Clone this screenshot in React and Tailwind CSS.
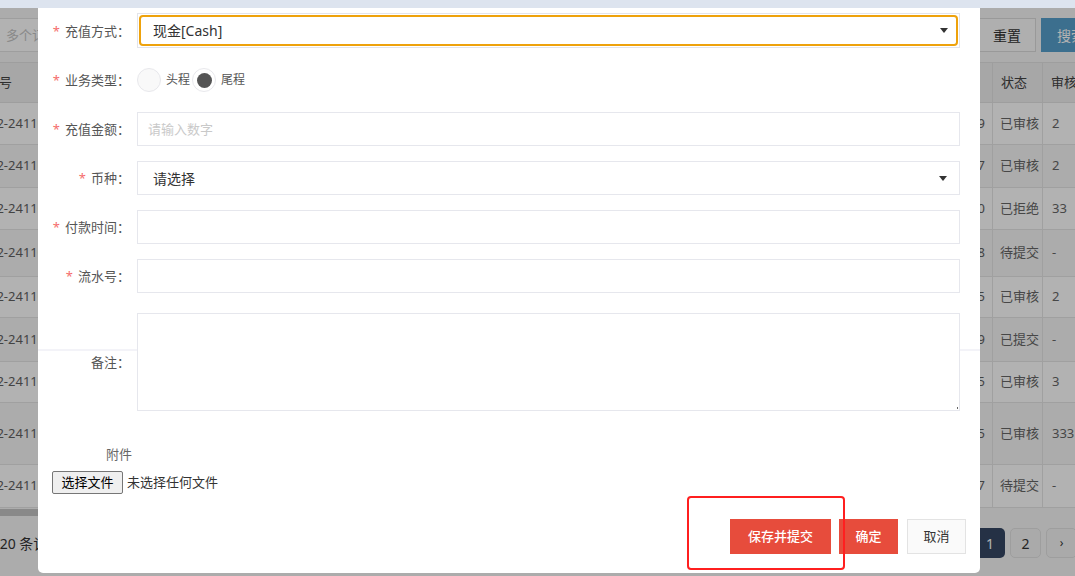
import React from 'react'

const rows = [
  { no: 'R2022-24110019', time: '2024-11-22 10:12:09', status: '已审核', audit: '2', h: 'h-[42px]', bg: 'bg-white' },
  { no: 'R2022-24110018', time: '2024-11-21 16:40:27', status: '已审核', audit: '2', h: 'h-[43px]', bg: 'bg-[#f7f7f7]' },
  { no: 'R2022-24110017', time: '2024-11-21 09:05:10', status: '已拒绝', audit: '33', h: 'h-[42px]', bg: 'bg-white' },
  { no: 'R2022-24110016', time: '2024-11-20 18:22:48', status: '待提交', audit: '-', h: 'h-[47px]', bg: 'bg-[#f7f7f7]' },
  { no: 'R2022-24110015', time: '2024-11-20 11:31:55', status: '已审核', audit: '2', h: 'h-[41px]', bg: 'bg-white' },
  { no: 'R2022-24110014', time: '2024-11-19 15:02:39', status: '已提交', audit: '-', h: 'h-[44px]', bg: 'bg-[#f7f7f7]' },
  { no: 'R2022-24110013', time: '2024-11-19 08:47:15', status: '已审核', audit: '3', h: 'h-[41px]', bg: 'bg-white' },
  { no: 'R2022-24110012', time: '2024-11-18 13:26:05', status: '已审核', audit: '333', h: 'h-[62px]', bg: 'bg-[#f7f7f7]' },
  { no: 'R2022-24110011', time: '2024-11-18 10:14:37', status: '待提交', audit: '-', h: 'h-[43px]', bg: 'bg-white' },
]

function Caret() {
  return (
    <svg width="8" height="5" viewBox="0 0 8 5" className="shrink-0">
      <path d="M0 0h8L4 5z" fill="#333" />
    </svg>
  )
}

function Label({ text, required }) {
  return (
    <div className="w-[78px] mr-[7px] shrink-0 text-right text-[13px] leading-[20px] text-[#555] whitespace-nowrap">
      {required && <span className="text-[#f56c6c] mr-[5px]">*</span>}
      {text}：
    </div>
  )
}

function BackgroundPage() {
  return (
    <div className="flex flex-col">
      {/* search bar */}
      <div className="flex items-center justify-between mt-[10px] h-[34px]">
        <input
          readOnly
          placeholder="多个订单号用逗号分隔"
          className="w-[320px] h-[34px] ml-[-1px] pl-[6px] bg-white border border-[#e2e2e2] text-[13px] placeholder:text-[#c4c4c4] outline-none"
        />
        <div className="flex gap-[5px] mr-[-26px]">
          <button className="w-[58px] h-[34px] bg-[#fbfbfb] border border-[#dcdcdc] text-[14px] text-[#333]">重置</button>
          <button className="w-[60px] h-[34px] bg-[#579fcc] text-[14px] text-white">搜索</button>
        </div>
      </div>

      {/* table */}
      <div className="ml-[-35px] w-[1138px] mt-[10px] text-[13px]">
        <div className="flex h-[41px] bg-[#efefef] border-y border-[#e3e3e3] text-[#444]">
          <div className="w-[200px] pl-[8px] flex items-center">订单号</div>
          <div className="flex-1 flex items-center justify-center border-r border-[#e3e3e3]">付款时间</div>
          <div className="w-[50px] pl-[8px] flex items-center border-r border-[#e3e3e3]">状态</div>
          <div className="w-[60px] pl-[8px] flex items-center">审核人</div>
        </div>
        {rows.map((r) => (
          <div key={r.no} className={`flex ${r.h} ${r.bg} border-b border-[#e6e6e6] text-[#616161]`}>
            <div className="w-[200px] pl-[1px] flex items-center">{r.no}</div>
            <div className="flex-1 flex items-center justify-end pr-[7px] border-r border-[#e6e6e6]">{r.time}</div>
            <div className="w-[50px] pl-[7px] flex items-center border-r border-[#e6e6e6] text-[#666]">{r.status}</div>
            <div className="w-[60px] pl-[9px] flex items-center text-[#666]">{r.audit}</div>
          </div>
        ))}
      </div>

      {/* horizontal scrollbar */}
      <div className="mt-[1px] h-[7px]">
        <div className="w-[520px] h-[7px] bg-[#c4c4c4]" />
      </div>

      {/* pagination */}
      <div className="flex items-center justify-between mt-[12px] h-[30px]">
        <div className="ml-[-18px] text-[14px] text-[#333]">共 20 条记录</div>
        <div className="flex gap-[5px] mr-[-2px] text-[14px]">
          <div className="w-[30px] h-[30px] rounded-[5px] bg-[#354764] text-white flex items-center justify-center">1</div>
          <div className="w-[31px] h-[30px] rounded-[5px] bg-[#f4f4f4] border border-[#e2e2e2] text-[#333] flex items-center justify-center">2</div>
          <div className="w-[31px] h-[30px] rounded-[5px] bg-[#f4f4f4] border border-[#e2e2e2] text-[#333] flex items-center justify-center text-[12px]">›</div>
        </div>
      </div>
    </div>
  )
}

function RechargeModal() {
  return (
    <div className="absolute left-[38px] top-0 w-[942px] h-[565px] bg-white rounded-b-[5px] px-[14px] pt-[5px]">
      {/* 充值方式 */}
      <div className="flex items-center h-[35px] mb-[15px] pr-[6px]">
        <Label text="充值方式" required />
        <div className="flex-1 h-[35px] border border-[#e3e4ea] p-[1px]">
          <div className="h-full border-2 border-[#eea20c] rounded-[4px] flex items-center justify-between pl-[12px] pr-[8px]">
            <span className="text-[14px] text-[#333]">现金[Cash]</span>
            <Caret />
          </div>
        </div>
      </div>

      {/* 业务类型 */}
      <div className="flex items-center h-[34px] mb-[15px] pr-[6px]">
        <Label text="业务类型" required />
        <div className="flex items-center text-[12px] text-[#555]">
          <span className="w-[24px] h-[24px] rounded-full border border-[#e8e8ec] bg-[#f9f9f9]" />
          <span className="ml-[5px] mr-[2px]">头程</span>
          <span className="w-[24px] h-[24px] rounded-full border border-[#e8e8ec] bg-white flex items-center justify-center">
            <span className="w-[15px] h-[15px] rounded-full bg-[#555]" />
          </span>
          <span className="ml-[5px]">尾程</span>
        </div>
      </div>

      {/* 充值金额 */}
      <div className="flex items-center h-[34px] mb-[15px] pr-[6px]">
        <Label text="充值金额" required />
        <input
          readOnly
          placeholder="请输入数字"
          className="flex-1 h-[34px] border border-[#e6e7ed] pl-[10px] text-[13px] placeholder:text-[#c9c9c9] outline-none"
        />
      </div>

      {/* 币种 */}
      <div className="flex items-center h-[34px] mb-[15px] pr-[6px]">
        <Label text="币种" required />
        <div className="flex-1 h-[34px] border border-[#e6e7ed] flex items-center justify-between pl-[15px] pr-[12px]">
          <span className="text-[14px] text-[#333]">请选择</span>
          <Caret />
        </div>
      </div>

      {/* 付款时间 */}
      <div className="flex items-center h-[34px] mb-[15px] pr-[6px]">
        <Label text="付款时间" required />
        <input readOnly className="flex-1 h-[34px] border border-[#e6e7ed] outline-none" />
      </div>

      {/* 流水号 */}
      <div className="flex items-center h-[34px] mb-[20px] pr-[6px]">
        <Label text="流水号" required />
        <input readOnly className="flex-1 h-[34px] border border-[#e6e7ed] outline-none" />
      </div>

      {/* 备注 */}
      <div className="relative flex items-center h-[98px] pr-[6px]">
        <div className="absolute left-[-14px] right-[-14px] top-[36px] h-[2px] bg-[#f3f3f8]" />
        <div className="relative">
          <Label text="备注" />
        </div>
        <div className="relative flex-1 h-[98px]">
          <textarea readOnly className="w-full h-full border border-[#e6e7ed] bg-white resize-none outline-none block" />
          <span className="absolute right-[2px] bottom-[2px] w-[1px] h-[2px] bg-[#666]" />
        </div>
      </div>

      {/* 附件 */}
      <div className="mt-[33px] pl-[54px] text-[13px] leading-[20px] text-[#666]">附件</div>
      <div className="flex items-center mt-[7px] h-[23px]">
        <button className="w-[71px] h-[23px] border border-[#767676] bg-[#efefef] rounded-[2px] text-[13px] text-black">选择文件</button>
        <span className="ml-[4px] text-[13px] text-[#333]">未选择任何文件</span>
      </div>

      {/* footer */}
      <div className="flex justify-end gap-[8px] mt-[25px]">
        <button className="w-[101px] h-[35px] bg-[#e74c3c] text-white text-[13px] font-medium">保存并提交</button>
        <button className="w-[59px] h-[35px] bg-[#e74c3c] text-white text-[13px] font-medium">确定</button>
        <button className="ml-[1px] w-[59px] h-[35px] bg-[#fafafa] border border-[#e3e3e3] text-[#333] text-[13px]">取消</button>
      </div>
    </div>
  )
}

export default function App() {
  return (
    <div className="relative w-[1075px] h-[576px] overflow-hidden bg-[#f7f7f7] font-['Noto_Sans','Noto_Sans_CJK_SC',sans-serif]">
      <div className="h-[8px] bg-[#dde4ef]" />
      <div className="relative h-[568px]">
        <BackgroundPage />
        <div className="absolute inset-0 bg-black/30" />
        <RechargeModal />
        {/* annotation box around the save button */}
        <div className="absolute left-[687px] top-[488px] w-[158px] h-[74px] border-2 border-[#ff1f1f] rounded-[4px]" />
      </div>
    </div>
  )
}
